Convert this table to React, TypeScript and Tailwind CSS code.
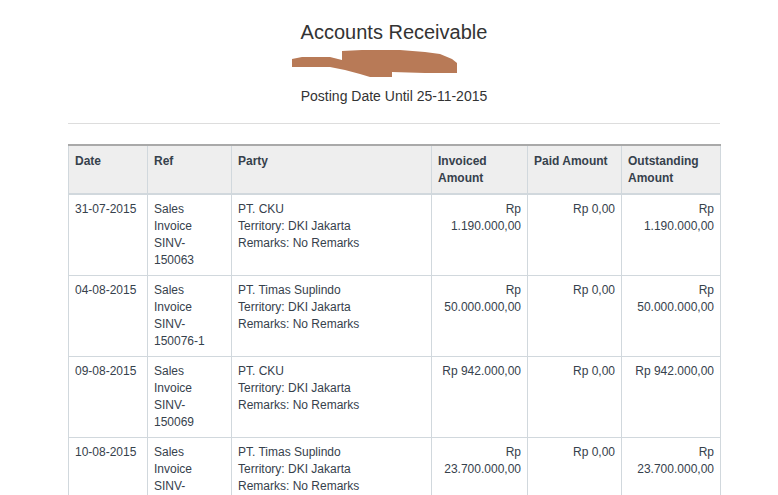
import React from 'react';

type Row = {
  date: string;
  ref: string[];
  party: string;
  invoiced: string[];
  paid: string;
  outstanding: string[];
};

const rows: Row[] = [
  {
    date: '31-07-2015',
    ref: ['Sales', 'Invoice', 'SINV-', '150063'],
    party: 'PT. CKU',
    invoiced: ['Rp', '1.190.000,00'],
    paid: 'Rp 0,00',
    outstanding: ['Rp', '1.190.000,00'],
  },
  {
    date: '04-08-2015',
    ref: ['Sales', 'Invoice', 'SINV-', '150076-1'],
    party: 'PT. Timas Suplindo',
    invoiced: ['Rp', '50.000.000,00'],
    paid: 'Rp 0,00',
    outstanding: ['Rp', '50.000.000,00'],
  },
  {
    date: '09-08-2015',
    ref: ['Sales', 'Invoice', 'SINV-', '150069'],
    party: 'PT. CKU',
    invoiced: ['Rp 942.000,00'],
    paid: 'Rp 0,00',
    outstanding: ['Rp 942.000,00'],
  },
  {
    date: '10-08-2015',
    ref: ['Sales', 'Invoice', 'SINV-', '150072'],
    party: 'PT. Timas Suplindo',
    invoiced: ['Rp', '23.700.000,00'],
    paid: 'Rp 0,00',
    outstanding: ['Rp', '23.700.000,00'],
  },
];

const Lines: React.FC<{ items: string[] }> = ({ items }) => (
  <>
    {items.map((t, i) => (
      <div key={i}>{t}</div>
    ))}
  </>
);

const App: React.FC = () => {
  const th =
    'border-x border-[#d1d8dd] px-[6px] pt-[7px] pb-[6px] text-left align-top font-bold';
  const td = 'border-x border-[#d1d8dd] px-[6px] pt-[6px] pb-[6px] align-top';

  return (
    <div
      className="min-h-[495px] bg-white text-[#36414c]"
      style={{ fontFamily: '"Liberation Sans", Arial, sans-serif' }}
    >
      <div className="ml-[68px] w-[652px] pt-[20px]">
        <h1 className="text-center text-[20px] leading-[24px] text-[#333]">
          Accounts Receivable
        </h1>

        {/* redacted company name */}
        <div className="mt-[6px] flex justify-center">
          <svg width="204" height="30" viewBox="0 0 204 30">
            <path
              d="M0 9 L10 7 L38 7 L50 10 L50 1 L70 0 L108 0 L133 2 L148 4 L160 9 L165 13 L165 23 L133 23 L100 22 L100 27 L78 27 L68 24 L53 20 L38 17 L0 17 Z"
              fill="#b87a57"
            />
          </svg>
        </div>

        <p className="mt-[6px] text-center text-[14px] leading-[20px] text-[#333]">
          Posting Date Until 25-11-2015
        </p>

        <hr className="mt-[17px] border-t border-[#dddddd]" />

        <table className="mt-[20px] w-[652px] table-fixed border-collapse text-[12px] leading-[17px]">
          <colgroup>
            <col className="w-[79px]" />
            <col className="w-[84px]" />
            <col className="w-[200px]" />
            <col className="w-[96px]" />
            <col className="w-[94px]" />
            <col className="w-[99px]" />
          </colgroup>
          <thead>
            <tr className="border-t-2 border-b-2 border-t-[#a9a9a9] border-b-[#d1d8dd] bg-[#eeeeee]">
              <th className={th}>Date</th>
              <th className={th}>Ref</th>
              <th className={th}>Party</th>
              <th className={th}>
                Invoiced
                <br />
                Amount
              </th>
              <th className={th}>Paid Amount</th>
              <th className={th}>
                Outstanding
                <br />
                Amount
              </th>
            </tr>
          </thead>
          <tbody>
            {rows.map((r, i) => (
              <tr key={i} className="border-b border-[#d1d8dd]">
                <td className={td}>{r.date}</td>
                <td className={td}>
                  <Lines items={r.ref} />
                </td>
                <td className={td}>
                  <div>{r.party}</div>
                  <div>Territory: DKI Jakarta</div>
                  <div>Remarks: No Remarks</div>
                </td>
                <td className={`${td} text-right`}>
                  <Lines items={r.invoiced} />
                </td>
                <td className={`${td} text-right`}>{r.paid}</td>
                <td className={`${td} text-right`}>
                  <Lines items={r.outstanding} />
                </td>
              </tr>
            ))}
          </tbody>
        </table>
      </div>
    </div>
  );
};

export default App;
